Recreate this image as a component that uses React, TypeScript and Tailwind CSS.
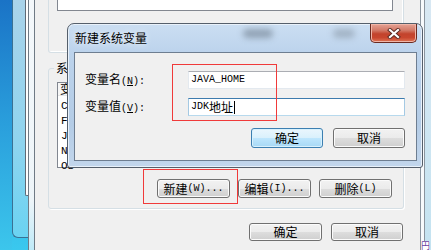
import React from "react";

const CJK = "font-['SimSun','Noto_Sans_CJK_SC',sans-serif]";
const MONO = "font-['Liberation_Mono',monospace]";

function L({ children }: { children: React.ReactNode }) {
  return <span className={`${MONO} text-[10px]`}>{children}</span>;
}

function Btn({
  w,
  h,
  focused,
  children,
}: {
  w: number;
  h: number;
  focused?: boolean;
  children: React.ReactNode;
}) {
  const base = focused
    ? "border-[#3c7fb1] bg-[linear-gradient(#eaf6fd_0%,#d9f0fc_50%,#bee6fd_51%,#a7d9f5_100%)] shadow-[inset_0_0_0_1px_#d8f1fd]"
    : "border-[#707070] bg-[linear-gradient(#f2f2f2_0%,#ebebeb_50%,#dddddd_51%,#cfcfcf_100%)] shadow-[inset_0_0_0_1px_#fbfbfb]";
  return (
    <div
      style={{ width: w, height: h }}
      className={`flex shrink-0 items-center justify-center rounded-[3px] border text-[12px] leading-none text-black ${base}`}
    >
      {children}
    </div>
  );
}

function Input({ focused, children }: { focused?: boolean; children: React.ReactNode }) {
  return (
    <div
      className={`flex h-[18px] w-[217px] items-center border bg-white pl-[2px] text-[12px] leading-none text-black ${
        focused ? "border-[#3d7bad] border-b-[#b7d9ed] border-x-[#a4c9e3]" : "border-[#e3e9ef] border-t-[#abadb3]"
      }`}
    >
      {children}
    </div>
  );
}

export default function App() {
  return (
    <div className={`relative flex h-[250px] w-[431px] overflow-hidden bg-[#f0f0f0] ${CJK}`}>
      {/* desktop strip */}
      <div className="h-full w-[12px] shrink-0 bg-[linear-gradient(#1a73c6_0%,#2a9fdc_50%,#3cc6ec_100%)]" />
      {/* outer window frame */}
      <div className="flex h-full w-[16px] shrink-0 flex-col bg-[linear-gradient(#2188d0,#3ac8ee)]">
        <div className="flex h-[238px] rounded-bl-[6px] border-b border-l border-[#3a7194] bg-[linear-gradient(#a9d3ea_0%,#8fd4ef_60%,#6ad3f2_100%)]">
          <div className="w-[12px]" />
          <div className="h-[196px] w-[3px] rounded-bl-[2px] border-b border-l border-[#5e6a76] bg-white" />
        </div>
      </div>
      {/* inner lines */}
      <div className="flex h-full w-[7px] shrink-0 border-l border-[#6f7a85] bg-[linear-gradient(#f4f8fb_0%,#eef5f9_80%,#bfeaf8_100%)]">
        <div className="w-[1px]" />
        <div className="h-full w-[5px] border-r border-[#6f7a85]" />
      </div>

      {/* background dialog */}
      <div className="relative flex h-full w-[383px] shrink-0 flex-col bg-[#f0f0f0]">
        {/* group 1 */}
        <div className="ml-[13px] h-[53px] w-[356px] rounded-b-[3px] border-x border-b border-[#d5dfe5] shadow-[inset_-1px_-1px_0_#ffffff]">
          <div className="ml-[8px] h-[11px] w-[336px] border-x border-b border-[#828790] bg-white" />
        </div>
        {/* group 2 */}
        <div className="relative ml-[13px] mt-[15px] h-[141px] w-[356px] rounded-[3px] border border-[#d5dfe5] shadow-[1px_1px_0_#ffffff]">
          <div className="absolute left-[5px] top-[-8px] bg-[#f0f0f0] px-[2px] text-[12px] leading-[14px] text-black">
            系统变量(<u>S</u>)
          </div>
          <div className="ml-[8px] mt-[13px] flex h-[86px] w-[336px] flex-col border border-[#828790] bg-white">
            <div className="flex h-[14px] items-center border-b border-[#e5e5e5] bg-[#f6f6f6] pl-[2px] text-[12px] leading-none">
              变量
            </div>
            <div className="flex flex-col pl-[3px] pt-[3px] text-[11px] leading-[15px] text-black">
              <span className={MONO}>ComSpec</span>
              <span className={MONO}>FP_NO_HOST</span>
              <span className={MONO}>JAVA_HOME</span>
              <span className={MONO}>NUMBER_OF</span>
              <span className={MONO}>OS</span>
            </div>
          </div>
          <div className="ml-[108px] mt-[11px] flex gap-[8px]">
            <Btn w={73} h={19}>
              新建<L>(W)...</L>
            </Btn>
            <Btn w={73} h={19}>
              编辑<L>(I)...</L>
            </Btn>
            <Btn w={73} h={19}>
              删除<L>(L)</L>
            </Btn>
          </div>
        </div>
        <div className="ml-[214px] mt-[14px] flex gap-[9px]">
          <Btn w={73} h={18}>
            确定
          </Btn>
          <Btn w={72} h={18}>
            取消
          </Btn>
        </div>
      </div>

      {/* right strip */}
      <div className="relative flex h-full w-[13px] shrink-0">
        <div className="h-full w-[2px] bg-[#f0f0f0]" />
        <div className="h-full w-[5px] border-l border-r border-[#8a949e] bg-[#f7fafc]" />
        <div className="h-full w-[6px] bg-[linear-gradient(#d8e8f3,#c4e3f1)]" />
        <div className="absolute bottom-[0px] left-[3px] bg-white text-[9px] leading-none text-[#6a3fa0]">円</div>
      </div>

      {/* red highlight around 新建 */}
      <div className="absolute left-[143px] top-[169px] h-[35px] w-[95px] border border-[#f03a3a]" />

      {/* foreground dialog */}
      <div className="absolute left-[67px] top-[23px] flex h-[145px] w-[356px] flex-col rounded-t-[7px] rounded-b-[3px] border border-[#555f6b] bg-[linear-gradient(#cbdef2_0%,#bcd3ec_20%,#b4cce6_70%,#c2d6ec_100%)] shadow-[inset_0_0_0_1px_#e8f1fa]">
        {/* title bar */}
        <div className="relative flex h-[28px] shrink-0 items-center pl-[7px]">
          <div className="absolute left-[175px] top-[5px] h-[9px] w-[30px] rounded-full bg-[#6d7c8c] opacity-60 blur-[3px]" />
          <div className="absolute left-[265px] top-[5px] h-[9px] w-[22px] rounded-full bg-[#7e8c9a] opacity-50 blur-[3px]" />
          <span className="relative text-[12px] leading-none text-black [text-shadow:0_0_6px_#ffffff]">新建系统变量</span>
          <div className="absolute left-[302px] top-[0px] flex h-[19px] w-[47px] items-center justify-center rounded-b-[5px] border border-t-0 border-[#6a2a20] bg-[linear-gradient(#e6a395_0%,#d27a68_35%,#c2432c_55%,#c8462e_75%,#de7656_100%)] shadow-[inset_0_0_0_1px_#f0b6a8]">
            <svg width="14" height="11" viewBox="0 0 14 11">
              <path d="M3 2 L11 9 M11 2 L3 9" stroke="#5a2a22" strokeWidth="4" strokeLinecap="square" />
              <path d="M3 2 L11 9 M11 2 L3 9" stroke="#ffffff" strokeWidth="2.2" strokeLinecap="square" />
            </svg>
          </div>
        </div>
        {/* client */}
        <div className="ml-[6px] mr-[5px] mb-[6px] flex flex-1 flex-col border border-[#6e7e91] bg-[#f0f0f0]">
          <div className="mt-[18px] flex items-center">
            <div className="w-[113px] pl-[10px] text-[12px] leading-none text-black">
              变量名<L>(<u>N</u>):</L>
            </div>
            <Input>
              <span className={`${MONO} text-[10px]`}>JAVA_HOME</span>
            </Input>
          </div>
          <div className="mt-[9px] flex items-center">
            <div className="w-[113px] pl-[10px] text-[12px] leading-none text-black">
              变量值<L>(<u>V</u>):</L>
            </div>
            <Input focused>
              <span className={`${MONO} text-[10px]`}>JDK</span>
              <span>地址</span>
              <span className="ml-[1px] h-[13px] w-[1px] bg-black" />
            </Input>
          </div>
          <div className="ml-[176px] mt-[12px] flex gap-[10px]">
            <Btn w={72} h={20} focused>
              确定
            </Btn>
            <Btn w={72} h={20}>
              取消
            </Btn>
          </div>
        </div>
      </div>

      {/* red highlight around inputs */}
      <div className="absolute left-[172px] top-[64px] h-[57px] w-[105px] border border-[#f03a3a]" />
    </div>
  );
}
